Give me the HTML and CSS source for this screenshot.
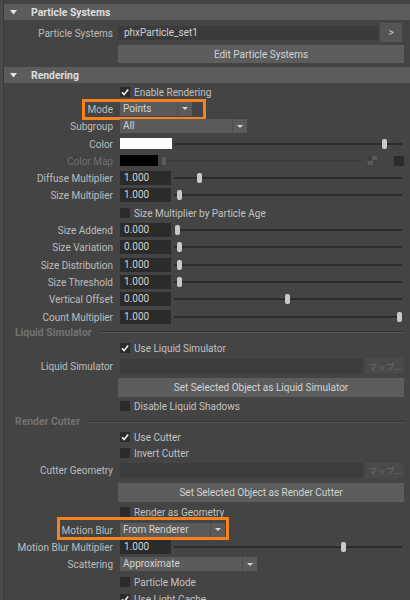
FILE: index.html
```html
<!DOCTYPE html>
<html>
<head>
<meta charset="utf-8">
<link rel="stylesheet" href="styles.css">
</head>
<body>
<div class="panel">
  <div class="head"><svg class="tri" viewBox="0 0 7 5"><polygon points="0,0 7,0 3.5,4.5" fill="#e2e2e2"/></svg><span>Particle Systems</span></div>
  <div class="row r-ps">
    <div class="lbl">Particle Systems</div>
    <div class="ctl flush">
      <div class="tf">phxParticle_set1</div>
      <div class="sbtn">&gt;</div>
    </div>
  </div>
  <div class="btnrow first"><div class="btn h18">Edit Particle Systems</div></div>

  <div class="head h2"><svg class="tri" viewBox="0 0 7 5"><polygon points="0,0 7,0 3.5,4.5" fill="#e2e2e2"/></svg><span>Rendering</span></div>

  <div class="row"><div class="lbl"></div><div class="ctl"><span class="cb"><svg viewBox="0 0 10 10"><polyline points="2,5.2 4.1,7.6 8.2,2.4" fill="none" stroke="#ececec" stroke-width="1.6"/></svg></span><span class="ct">Enable Rendering</span></div></div>
  <div class="row">
    <div class="lbl">Mode</div>
    <div class="ctl"><div class="dd w-mode"><span class="val">Points</span><span class="arr"><svg viewBox="0 0 6 3"><polygon points="0,0 6,0 3,3" fill="#d8d8d8"/></svg></span></div></div>
    <div class="hl hl-mode"></div>
  </div>
  <div class="row">
    <div class="lbl">Subgroup</div>
    <div class="ctl"><div class="dd w-sub"><span class="val">All</span><span class="arr"><svg viewBox="0 0 6 3"><polygon points="0,0 6,0 3,3" fill="#d8d8d8"/></svg></span></div></div>
  </div>
  <div class="row">
    <div class="lbl">Color</div>
    <div class="ctl"><div class="sw white"></div><div class="slider s-sw"><span class="knob" style="left:91.4%"></span></div></div>
  </div>
  <div class="row">
    <div class="lbl dim">Color Map</div>
    <div class="ctl"><div class="sw black"></div><div class="slider dimmed"><span class="knob"></span></div><span class="checker"></span><span class="dsq"></span></div>
  </div>
  <div class="row">
    <div class="lbl">Diffuse Multiplier</div>
    <div class="ctl"><div class="num">1.000</div><div class="slider"><span class="knob" style="left:10.3%"></span></div></div>
  </div>
  <div class="row">
    <div class="lbl">Size Multiplier</div>
    <div class="ctl"><div class="num">1.000</div><div class="slider"><span class="knob" style="left:1.1%"></span></div></div>
  </div>
  <div class="row"><div class="lbl"></div><div class="ctl"><span class="cb"></span><span class="ct">Size Multiplier by Particle Age</span></div></div>
  <div class="row">
    <div class="lbl">Size Addend</div>
    <div class="ctl"><div class="num">0.000</div><div class="slider"><span class="knob" style="left:0.4%"></span></div></div>
  </div>
  <div class="row">
    <div class="lbl">Size Variation</div>
    <div class="ctl"><div class="num">0.000</div><div class="slider"><span class="knob" style="left:1.1%"></span></div></div>
  </div>
  <div class="row">
    <div class="lbl">Size Distribution</div>
    <div class="ctl"><div class="num">1.000</div><div class="slider"><span class="knob" style="left:1.1%"></span></div></div>
  </div>
  <div class="row">
    <div class="lbl">Size Threshold</div>
    <div class="ctl"><div class="num">1.000</div><div class="slider"><span class="knob" style="left:1.1%"></span></div></div>
  </div>
  <div class="row">
    <div class="lbl">Vertical Offset</div>
    <div class="ctl"><div class="num">0.000</div><div class="slider"><span class="knob" style="left:48.9%"></span></div></div>
  </div>
  <div class="row">
    <div class="lbl">Count Multiplier</div>
    <div class="ctl"><div class="num">1.000</div><div class="slider"><span class="knob" style="left:97.6%"></span></div></div>
  </div>

  <div class="sec"><span>Liquid Simulator</span></div>
  <div class="row"><div class="lbl"></div><div class="ctl"><span class="cb"><svg viewBox="0 0 10 10"><polyline points="2,5.2 4.1,7.6 8.2,2.4" fill="none" stroke="#ececec" stroke-width="1.6"/></svg></span><span class="ct">Use Liquid Simulator</span></div></div>
  <div class="row tfrow">
    <div class="lbl">Liquid Simulator</div>
    <div class="ctl"><div class="tf2"></div><div class="mapbtn">マップ...</div></div>
  </div>
  <div class="btnrow"><div class="btn">Set Selected Object as Liquid Simulator</div></div>
  <div class="row"><div class="lbl"></div><div class="ctl"><span class="cb"></span><span class="ct">Disable Liquid Shadows</span></div></div>

  <div class="sec"><span>Render Cutter</span></div>
  <div class="row h16"><div class="lbl"></div><div class="ctl"><span class="cb"><svg viewBox="0 0 10 10"><polyline points="2,5.2 4.1,7.6 8.2,2.4" fill="none" stroke="#ececec" stroke-width="1.6"/></svg></span><span class="ct">Use Cutter</span></div></div>
  <div class="row h16"><div class="lbl"></div><div class="ctl"><span class="cb"></span><span class="ct">Invert Cutter</span></div></div>
  <div class="row tfrow">
    <div class="lbl">Cutter Geometry</div>
    <div class="ctl"><div class="tf2"></div><div class="mapbtn">マップ...</div></div>
  </div>
  <div class="btnrow"><div class="btn">Set Selected Object as Render Cutter</div></div>
  <div class="row after-btn"><div class="lbl"></div><div class="ctl"><span class="cb"></span><span class="ct">Render as Geometry</span></div></div>
  <div class="row">
    <div class="lbl">Motion Blur</div>
    <div class="ctl"><div class="dd w-mb"><span class="val">From Renderer</span><span class="arr"><svg viewBox="0 0 6 3"><polygon points="0,0 6,0 3,3" fill="#d8d8d8"/></svg></span></div></div>
    <div class="hl hl-mb"></div>
  </div>
  <div class="row">
    <div class="lbl">Motion Blur Multiplier</div>
    <div class="ctl"><div class="num">1.000</div><div class="slider"><span class="knob" style="left:73.2%"></span></div></div>
  </div>
  <div class="row">
    <div class="lbl">Scattering</div>
    <div class="ctl"><div class="dd w-sc"><span class="val">Approximate</span><span class="arr"><svg viewBox="0 0 6 3"><polygon points="0,0 6,0 3,3" fill="#d8d8d8"/></svg></span></div></div>
  </div>
  <div class="row"><div class="lbl"></div><div class="ctl"><span class="cb"></span><span class="ct">Particle Mode</span></div></div>
  <div class="row"><div class="lbl"></div><div class="ctl"><span class="cb"><svg viewBox="0 0 10 10"><polyline points="2,5.2 4.1,7.6 8.2,2.4" fill="none" stroke="#ececec" stroke-width="1.6"/></svg></span><span class="ct">Use Light Cache</span></div></div>
</div>
</body>
</html>
```

FILE: styles.css
```css
* { box-sizing: border-box; }
html, body { margin: 0; padding: 0; }
body {
  background: #4a4a4a;
  font-family: Roboto, "Open Sans", "Noto Sans CJK JP", sans-serif;
  font-size: 10px;
  color: #bdbdbd;
  overflow: hidden;
}
.panel {
  margin-left: 3px;
  border-left: 1px solid #3a3a3a;
  background: #444444;
  min-height: 600px;
  padding-top: 4px;
}
.head {
  display: flex;
  align-items: center;
  height: 16px;
  background: #5c5c5c;
  padding-left: 6px;
  font-weight: bold;
  font-size: 10.4px;
  color: #dedede;
}
.head.h2 { margin-top: 4px; }
.tri { width: 7px; height: 5px; margin-right: 14px; flex: none; }

.row {
  display: grid;
  grid-template-columns: 109px 1fr;
  column-gap: 5px;
  align-items: center;
  height: 17.3px;
  padding-right: 6px;
  position: relative;
}
.row.h16 { height: 16px; }
.row.tfrow { height: 19px; }
.row.r-ps { height: 19px; margin-top: 3px; }
.row.after-btn { margin-top: 2px; }
.lbl { text-align: right; white-space: nowrap; color: #bdbdbd; padding-top: 1px; }
.lbl.dim { color: #6e6e6e; }
.ctl { display: flex; align-items: center; padding-left: 2px; min-width: 0; height: 100%; }
.ctl.flush { padding-left: 0; padding-right: 2px; }
.ct { color: #c2c2c2; white-space: nowrap; padding-top: 1px; }

.cb {
  width: 10px; height: 10px;
  background: #2b2b2b;
  margin-right: 4px;
  flex: none;
  display: flex;
}
.cb svg { width: 10px; height: 10px; }

.tf {
  flex: 1;
  height: 14px;
  background: #3b3b3b;
  color: #d2d2d2;
  padding-left: 6px;
  line-height: 14px;
}
.sbtn {
  width: 22px; height: 19px;
  margin-left: 2px;
  background: #555555;
  color: #cfcfcf;
  display: flex; align-items: center; justify-content: center;
}
.btnrow { padding-left: 114px; padding-right: 6px; margin-top: 3px; }
.btnrow.first { margin-top: 3px; }
.btn {
  height: 19px;
  background: #5d5d5d;
  color: #d4d4d4;
  display: flex; align-items: center; justify-content: center;
  white-space: nowrap;
}
.btn.h18 { height: 18px; }

.dd {
  display: flex;
  height: 14px;
  background: #5b5b5b;
  color: #d4d4d4;
}
.dd .val { flex: 1; padding-left: 3px; line-height: 14px; white-space: nowrap; }
.dd .arr {
  width: 15px;
  border-left: 1px solid #4b4b4b;
  display: flex; align-items: center; justify-content: center;
}
.dd .arr svg { width: 6px; height: 3px; }
.w-mode { width: 72px; }
.w-sub { width: 127px; }
.w-mb { width: 105px; }
.w-sc { width: 137px; }

.hl {
  position: absolute;
  border: 3px solid #f5821f;
  pointer-events: none;
}
.hl-mode { left: 78px; top: -1.3px; width: 124px; height: 21px; }
.hl-mb { left: 53px; top: -4px; width: 172px; height: 23px; }

.sw { height: 11px; flex: none; }
.sw.white { width: 52px; background: #ffffff; }
.sw.black { width: 38px; background: #000000; }

.num {
  width: 51px; height: 14px;
  background: #2b2b2b;
  color: #d2d2d2;
  padding-left: 4px;
  line-height: 14px;
  flex: none;
}
.slider {
  flex: 1;
  height: 12px;
  position: relative;
  margin-left: 3px;
  margin-right: 2px;
}
.slider.s-sw { margin-left: 2px; }
.slider::before {
  content: "";
  position: absolute;
  left: 0; right: 0; top: 5px;
  height: 2px;
  background: #2c2c2c;
}
.knob {
  position: absolute;
  top: 1px;
  width: 5px; height: 10px;
  background: #c9c9c9;
  border-radius: 2px;
}
.slider.dimmed { flex: none; width: 200px; margin-left: 4px; margin-right: 0; }
.slider.dimmed::before { background: #3c3c3c; left: 4px; }
.slider.dimmed .knob { left: 0; top: 2px; width: 4px; height: 8px; background: #5c5c5c; border-radius: 1px; }
.checker {
  width: 9px; height: 9px;
  margin-left: 6px;
  flex: none;
  background: conic-gradient(#5a5a5a 0 25%, #3e3e3e 0 50%, #5a5a5a 0 75%, #3e3e3e 0);
  background-size: 9px 9px;
}
.dsq {
  width: 10px; height: 10px;
  margin-left: 17px;
  background: #2b2b2b;
  flex: none;
}

.sec {
  display: flex;
  align-items: center;
  height: 14px;
  padding-left: 11px;
  padding-right: 6px;
  color: #727272;
  font-weight: bold;
  font-size: 10.4px;
  white-space: nowrap;
}
.sec::after {
  content: "";
  flex: 1;
  margin-left: 8px;
  border-top: 1px solid #363636;
  border-bottom: 1px solid #555555;
}

.tf2 { flex: 1; height: 14px; background: #3c3c3c; }
.mapbtn {
  width: 38px; height: 15px;
  margin-left: 3px;
  background: #4a4a4a;
  color: #6a6a6a;
  font-family: "Noto Sans CJK JP", sans-serif;
  font-size: 8.5px;
  display: flex; align-items: center; justify-content: center;
  white-space: nowrap;
}
```
